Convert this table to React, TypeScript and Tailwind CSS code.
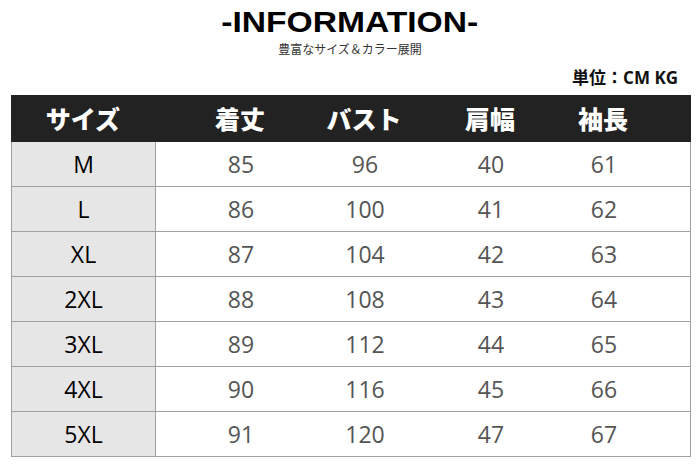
import React from "react";

const rows = [
  ["M", "85", "96", "40", "61"],
  ["L", "86", "100", "41", "62"],
  ["XL", "87", "104", "42", "63"],
  ["2XL", "88", "108", "43", "64"],
  ["3XL", "89", "112", "44", "65"],
  ["4XL", "90", "116", "45", "66"],
  ["5XL", "91", "120", "47", "67"],
];

const cols = "grid grid-cols-[144px_23px_124px_124px_128px_98px_1fr]";
const jp = { fontFamily: '"Noto Sans CJK JP", "Noto Sans", sans-serif' };
const num = { fontFamily: '"Open Sans", "Noto Sans CJK JP", sans-serif' };

export default function App() {
  return (
    <div className="w-[700px] h-[466px] bg-white overflow-hidden relative">
      <div className="flex flex-col items-center pt-[6px]">
        <div
          className="text-[30px] leading-[32px] font-bold text-black scale-x-[1.12]"
          style={{ fontFamily: '"Liberation Sans", Arial, sans-serif' }}
        >
          -INFORMATION-
        </div>
        <div className="text-[12px] leading-[16px] mt-[3px] text-[#333]" style={jp}>
          豊富なサイズ＆カラー展開
        </div>
      </div>
      <div className="flex justify-end pr-[22px] mt-[10px]">
        <div className="text-[17px] leading-[20px] font-bold text-[#111]" style={{ fontFamily: '"Noto Sans CJK JP", "Open Sans", sans-serif' }}>
          単位：<span style={num}>CM KG</span>
        </div>
      </div>
      <div className="mx-[11px] w-[680px] mt-[7px]">
        <div className={`${cols} h-[47px] bg-[#222] items-center text-white text-[25px] font-black`} style={jp}>
          <div className="text-center">サイズ</div>
          <div></div>
          <div className="text-center">着丈</div>
          <div className="text-center">バスト</div>
          <div className="text-center">肩幅</div>
          <div className="text-center">袖長</div>
          <div></div>
        </div>
        <div className="border-l border-r border-[#a0a0a0]">
          {rows.map((r, i) => (
            <div key={i} className={`${cols} h-[45px] border-b border-[#a0a0a0] items-stretch text-[23px]`} style={num}>
              <div className="bg-[#e6e6e6] border-r border-[#a0a0a0] flex items-center justify-center text-black font-medium">
                {r[0]}
              </div>
              <div></div>
              {r.slice(1).map((v, j) => (
                <div key={j} className="flex items-center justify-center text-[#555]">
                  {v}
                </div>
              ))}
              <div></div>
            </div>
          ))}
        </div>
      </div>
    </div>
  );
}
